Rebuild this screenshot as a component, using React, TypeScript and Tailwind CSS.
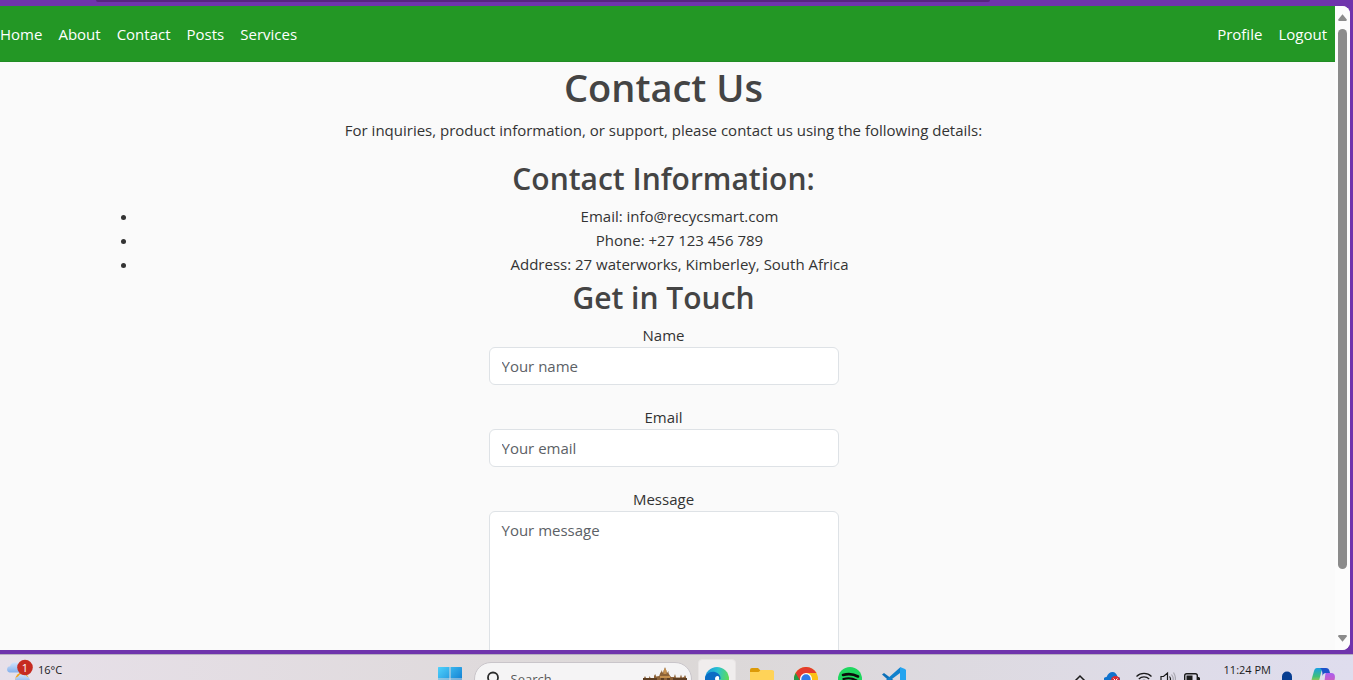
import { ReactNode, useState } from "react";

const contactDetails = [
  "Email: info@recycsmart.com",
  "Phone: +27 123 456 789",
  "Address: 27 waterworks, Kimberley, South Africa",
];

function NavLink({ children }: { children: ReactNode }) {
  return (
    <a href="#" className="px-2 py-4 text-white">
      {children}
    </a>
  );
}

function Navbar() {
  return (
    <nav className="flex h-14 items-center justify-between bg-[#239725] border-b border-[#218c24]">
      <div className="-ml-2 flex">
        <NavLink>Home</NavLink>
        <NavLink>About</NavLink>
        <NavLink>Contact</NavLink>
        <NavLink>Posts</NavLink>
        <NavLink>Services</NavLink>
      </div>
      <div className="flex">
        <NavLink>Profile</NavLink>
        <NavLink>Logout</NavLink>
      </div>
    </nav>
  );
}

function ContactForm() {
  const [form, setForm] = useState({ name: "", email: "", message: "" });
  const field =
    "block w-full rounded-md border border-[#dee2e6] bg-white px-3 text-[#212529] placeholder:text-[#5c6166] outline-none";

  return (
    <form className="mx-auto flex w-[350px] flex-col gap-5" onSubmit={(e) => e.preventDefault()}>
      <div>
        <label htmlFor="name" className="block">Name</label>
        <input
          id="name"
          className={`${field} h-[38px]`}
          placeholder="Your name"
          value={form.name}
          onChange={(e) => setForm({ ...form, name: e.target.value })}
        />
      </div>
      <div>
        <label htmlFor="email" className="block">Email</label>
        <input
          id="email"
          type="email"
          className={`${field} h-[38px]`}
          placeholder="Your email"
          value={form.email}
          onChange={(e) => setForm({ ...form, email: e.target.value })}
        />
      </div>
      <div>
        <label htmlFor="message" className="block">Message</label>
        <textarea
          id="message"
          className={`${field} h-[200px] resize-none py-1.5`}
          placeholder="Your message"
          value={form.message}
          onChange={(e) => setForm({ ...form, message: e.target.value })}
        />
      </div>
    </form>
  );
}

function Scrollbar() {
  return (
    <div className="flex w-[15px] shrink-0 flex-col items-center bg-[#fcfcfc] pt-2 pb-2">
      <svg width="9" height="7" viewBox="0 0 9 7" fill="#8b8b8b">
        <path d="M4.5 0.2 L8.8 5.6 Q9 7 8 7 H1 Q0 7 0.2 5.6 Z" />
      </svg>
      <div className="mt-2 mb-[66px] w-[9px] grow rounded-full bg-[#8b8b8b]" />
      <svg width="9" height="7" viewBox="0 0 9 7" fill="#8b8b8b">
        <path d="M4.5 6.8 L8.8 1.4 Q9 0 8 0 H1 Q0 0 0.2 1.4 Z" />
      </svg>
    </div>
  );
}

function WeatherIcon() {
  return (
    <svg width="28" height="28" viewBox="0 0 28 28">
      <defs>
        <linearGradient id="cloud" x1="0" y1="0" x2="0" y2="1">
          <stop offset="0" stopColor="#d3e4fb" />
          <stop offset="1" stopColor="#84b0ec" />
        </linearGradient>
      </defs>
      <circle cx="16" cy="20" r="6.5" fill="#f2a31c" />
      <path d="M3.5 13.500a3.200 3.200 0 0 1 .6-6.300A5.200 5.200 0 0 1 14 6.500v7z" fill="url(#cloud)" />
      <path d="M11 24a3.500 3.500 0 0 1 1-6.500 5 5 0 0 1 9 0A3.500 3.500 0 0 1 22 24z" fill="url(#cloud)" />
      <circle cx="19" cy="8.500" r="7.800" fill="#c62a20" />
      <text x="19" y="12.500" fontSize="11" fill="#fff" textAnchor="middle">1</text>
    </svg>
  );
}

function WindowsIcon() {
  return (
    <svg width="24" height="24" viewBox="0 0 24 24">
      <defs>
        <linearGradient id="win" x1="0" y1="0" x2="1" y2="1">
          <stop offset="0" stopColor="#4fd2fc" />
          <stop offset="1" stopColor="#0067c6" />
        </linearGradient>
      </defs>
      <path d="M.5 0H11.500V11.500H0V.5zM12.500 0H23.500L24 .5V11.500H12.500zM0 12.500H11.500V24H0zM12.500 12.500H24V24H12.500z" fill="url(#win)" />
    </svg>
  );
}

function CastleIcon() {
  return (
    <svg width="44" height="24" viewBox="0 0 44 24">
      <path
        d="M1 24V11l1-2 1 2h3l.7-2 .8 2H11V9l1.200-2 1 2.500 3-.5 1-3 1.200-1.500V3L20 6l1-3 1-3 1 3 1 3 1.500-2v2l1 2 1.500 2h3l1-3 1 3.500h4l1-3 1 3 2-.5 1-2 1 2v13z"
        fill="#8c6238"
      />
      <path d="M20.500 3.500L22 1l1.500 2.500V7h-3zM17 9h10v2H17zM4 12h6v1H4zM32 12h7v1h-7z" fill="#c48f4e" />
      <path d="M0 11h14v2H0zM30 11h14v2H30zM18 11v3h3v-3zM24 11v3h3v-3z" fill="#5d3e23" />
    </svg>
  );
}

function EdgeIcon() {
  return (
    <svg width="24" height="24" viewBox="0 0 24 24">
      <defs>
        <linearGradient id="edgeTop" x1="0" y1="0.200" x2="1" y2="0.400">
          <stop offset="0" stopColor="#1795dc" />
          <stop offset="0.500" stopColor="#2bc3d0" />
          <stop offset="1" stopColor="#5fdc55" />
        </linearGradient>
      </defs>
      <circle cx="12" cy="12" r="12" fill="url(#edgeTop)" />
      <path d="M0 12c0-5 5-8 10-7 4 1 6 4 5.500 7H11c-3 3 0 9 8 10-8 4-19 1-19-10z" fill="#0b6cc4" />
      <path d="M10 12c0-2 1.200-3 2.500-3 1.400 0 2 1.200 1.500 3-.4 2 1 3 3 3h-6z" fill="#fff" />
    </svg>
  );
}

function FolderIcon() {
  return (
    <svg width="24" height="24" viewBox="0 0 24 24">
      <path d="M0 3a2 2 0 0 1 2-2h6l3 3h11a2 2 0 0 1 2 2v6H0z" fill="#dc9a08" />
      <path d="M0 5h8.500L11 3h11a2 2 0 0 1 2 2v15H0z" fill="#ffd358" />
    </svg>
  );
}

function ChromeIcon() {
  return (
    <svg width="24" height="24" viewBox="0 0 24 24">
      <circle cx="12" cy="12" r="12" fill="#fbc116" />
      <path d="M12 12L1.600 6A12 12 0 0 0 12 24l5.200-9z" fill="#249a45" />
      <path d="M12 6h10.400A12 12 0 0 0 1.600 6l5.200 9z" fill="#e33b2e" />
      <circle cx="12" cy="12" r="6" fill="#fff" />
      <circle cx="12" cy="12" r="4.700" fill="#2e7be9" />
    </svg>
  );
}

function SpotifyIcon() {
  return (
    <svg width="24" height="24" viewBox="0 0 24 24" fill="none" stroke="#0c0c0c" strokeLinecap="round">
      <circle cx="12" cy="12" r="12" fill="#1fd75f" stroke="none" />
      <path d="M5 8c5-1.500 10.500-1 15 1.500" strokeWidth="2.600" />
      <path d="M5.500 12c4.500-1.300 9-.8 13 1.400" strokeWidth="2.200" />
      <path d="M6 16c4-1 7.500-.6 11 1.200" strokeWidth="1.800" />
    </svg>
  );
}

function VsCodeIcon() {
  return (
    <svg width="24" height="24" viewBox="0 0 24 24">
      <path d="M0 7.500L2 6l16 12v5.500z" fill="#0b6fb8" />
      <path d="M0 16.500L2 18 18 6V.5z" fill="#1080cc" />
      <path d="M18 0l5 2 1 1v18l-1 1-5 2z" fill="#24a4ef" />
    </svg>
  );
}

function CopilotIcon() {
  return (
    <svg width="24" height="24" viewBox="0 0 24 24">
      <defs>
        <linearGradient id="copL" x1="0" y1="0" x2="0" y2="1">
          <stop offset="0" stopColor="#189fe4" />
          <stop offset="0.500" stopColor="#3fc07a" />
          <stop offset="1" stopColor="#f5cf28" />
        </linearGradient>
        <linearGradient id="copR" x1="0" y1="0" x2="0" y2="1">
          <stop offset="0" stopColor="#a95df0" />
          <stop offset="1" stopColor="#f2608b" />
        </linearGradient>
      </defs>
      <path d="M6 1h8c-2 0-3 1-4 5L8 14c-.6 3-2 4-4 4-4 0-4-3-3-7l2-7c.5-2 1.500-3 3-3z" fill="url(#copL)" />
      <path d="M9 1h6c2 0 3 1 3.500 3L19 6h-4c-2 0-3 1-3.500 3 0-4-.5-7-2.500-8z" fill="#1c51ca" />
      <path d="M15 6h5c4 0 4.500 3 3.500 7l-2 7c-.6 2-2 3-4 3H9c2 0 3-1 4-5l1-8c.2-2 .5-4 1-4z" fill="url(#copR)" />
    </svg>
  );
}

function TrayIcons() {
  return (
    <div className="flex items-center gap-2">
      <svg width="16" height="16" viewBox="0 0 16 16" fill="none" stroke="#1b1b1b" strokeWidth="1.500">
        <path d="M3 10l5-5 5 5" />
      </svg>
      <svg className="ml-2" width="16" height="16" viewBox="0 0 16 16">
        <path d="M3 13a3.500 3.500 0 0 1-.5-7C4 2.500 6 1 8.500 1S13 3 13.500 6a3.500 3.500 0 0 1 0 7z" fill="#1173cd" />
        <circle cx="11.500" cy="9.500" r="4.500" fill="#d92c32" />
        <path d="M9.500 7.500l4 4M13.500 7.500l-4 4" stroke="#fff" />
      </svg>
      <svg className="ml-2" width="16" height="16" viewBox="0 0 16 16" fill="none" stroke="#1b1b1b" strokeWidth="1.200">
        <path d="M.5 5.500a10.500 10.500 0 0 1 15 0M2.800 8a7.400 7.400 0 0 1 10.400 0M5 10.500a4.300 4.300 0 0 1 6 0" />
        <circle cx="8" cy="13" r="1" fill="#1b1b1b" />
      </svg>
      <svg width="16" height="16" viewBox="0 0 16 16" fill="none" stroke="#1b1b1b" strokeWidth="1.200">
        <path d="M1 5.500h2.500L7.500 2v12l-4-3.500H1z" />
        <path d="M9.500 5.500q2 2.500 0 5" />
        <path d="M11.500 3.500q3.500 4.500 0 9M13.500 1.500q4 6.500 0 13" stroke="#aaa8b2" />
      </svg>
      <svg width="16" height="16" viewBox="0 0 16 16">
        <rect x=".7" y="2.700" width="12.600" height="10" rx="2" fill="none" stroke="#1b1b1b" strokeWidth="1.400" />
        <rect x="2.500" y="4.500" width="6" height="6.500" fill="#1b1b1b" />
        <path d="M14 6h1l1 1v2l-1 1h-1z" fill="#1b1b1b" />
      </svg>
    </div>
  );
}

function Taskbar() {
  return (
    <footer className="h-[26px] shrink-0 overflow-hidden border-t border-[#b6aebf] bg-linear-to-r from-[#e7e0e9] via-[#dcd8d7] to-[#dfddee] text-[11px] text-[#1b1b1b]">
      <div className="grid h-12 grid-cols-[1fr_auto_1fr] items-center pr-[10px]">
        <div className="flex items-start gap-1 self-start pt-1 pl-1.5">
          <WeatherIcon />
          <span className="leading-[22px]">16°C</span>
        </div>

        <div className="flex items-center">
          <WindowsIcon />
          <label className="ml-3 mr-1.5 flex h-[34px] w-[218px] items-center overflow-hidden rounded-full border border-[#c9c5ca] bg-[#f5f4f5] pl-2.5">
            <svg width="16" height="16" viewBox="0 0 16 16" fill="none" stroke="#2b2b2b" strokeWidth="1.800">
              <circle cx="8" cy="6.500" r="5" />
              <path d="M4.500 10.500L1 14.500" />
            </svg>
            <input
              aria-label="Search"
              placeholder="Search"
              className="ml-2.5 w-0 grow bg-transparent text-[13px] outline-none placeholder:text-[#5a5a5a]"
            />
            <span className="mr-1">
              <CastleIcon />
            </span>
          </label>
          <div className="flex h-10 w-[38px] items-center justify-center rounded border border-[#e8e4e4] bg-[#f0eded]">
            <EdgeIcon />
          </div>
          <div className="ml-3.5 flex gap-5">
            <FolderIcon />
            <ChromeIcon />
            <SpotifyIcon />
            <VsCodeIcon />
          </div>
        </div>

        <div className="flex h-12 items-center justify-end pr-2">
          <TrayIcons />
          <span className="ml-6 self-start pt-1 leading-[22px]">11:24 PM</span>
          <svg className="ml-2 mr-4" width="16" height="16" viewBox="0 0 16 16" fill="#083e91">
            <path d="M3 11V5.500a5 5 0 0 1 10 0V11l1.500 2h-13z" />
          </svg>
          <CopilotIcon />
        </div>
      </div>
    </footer>
  );
}

export default function App() {
  return (
    <div className="flex h-screen flex-col overflow-hidden bg-[#6f34ac] font-['Open_Sans','Segoe_UI',sans-serif] text-[15px] leading-6 text-[#333]">
      <div className="h-1.5 shrink-0">
        <div className="mr-[363px] ml-24 h-0.5 rounded-b bg-[#56267f]" />
      </div>

      <div className="mr-[3px] mb-1 flex min-h-0 grow overflow-hidden rounded-r-lg bg-[#fafafa]">
        <div className="min-w-0 grow overflow-hidden">
          <Navbar />
          <main className="mr-2 px-[106px] text-center">
            <h1 className="mb-1.5 text-[38px] leading-[50px] font-semibold text-[#444]">Contact Us</h1>
            <p className="mb-[15px]">
              For inquiries, product information, or support, please contact us using the following details:
            </p>
            <h2 className="mb-1 text-[30px] leading-[43px] font-semibold text-[#444]">Contact Information:</h2>
            <ul className="list-disc pl-8">
              {contactDetails.map((item) => (
                <li key={item}>{item}</li>
              ))}
            </ul>
            <h2 className="mb-1 text-[30px] leading-[43px] font-semibold text-[#444]">Get in Touch</h2>
            <ContactForm />
          </main>
        </div>
        <Scrollbar />
      </div>

      <Taskbar />
    </div>
  );
}
